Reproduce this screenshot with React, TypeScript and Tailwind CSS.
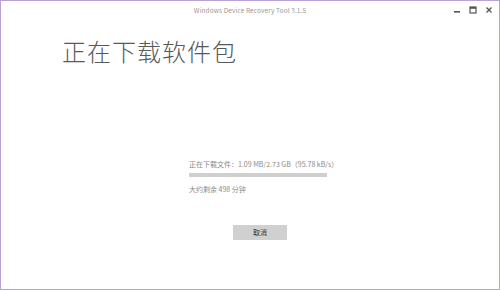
const App = () => {
    return (
        <div
            className="w-[500px] h-[290px] bg-white border border-[#b7a3d9] flex flex-col overflow-hidden"
            style={{ fontFamily: '"Noto Sans CJK SC", "Noto Sans", sans-serif' }}
        >
            {/* Title bar */}
            <div className="relative h-[20px] flex items-center justify-center shrink-0">
                <span className="text-[6.5px] text-[#9a9a9a] tracking-[0.1px]">Windows Device Recovery Tool 3.1.5</span>
                <div className="absolute right-[6px] top-[5px] flex items-center gap-[8px]">
                    <svg width="8" height="8" viewBox="0 0 8 8"><rect x="1" y="5" width="6" height="1.6" fill="#555" /></svg>
                    <svg width="8" height="8" viewBox="0 0 8 8"><rect x="1" y="1" width="6" height="6" fill="none" stroke="#555" strokeWidth="1.2" /><rect x="1" y="1" width="6" height="1.8" fill="#555" /></svg>
                    <svg width="8" height="8" viewBox="0 0 8 8"><path d="M1.5 1.5 L6.5 6.5 M6.5 1.5 L1.5 6.5" stroke="#555" strokeWidth="1.3" /></svg>
                </div>
            </div>

            {/* Heading */}
            <h1 className="pl-[61px] pt-[14px] text-[24px] leading-[32px] text-[#595959] font-light tracking-[1px]">正在下载软件包</h1>

            {/* Progress block */}
            <div className="mt-[92px] pl-[188px] flex flex-col">
                <span className="text-[7px] leading-[10px] text-[#8a8a8a]">正在下载文件：1.09 MB/2.73 GB（95.78 kB/s）</span>
                <div className="mt-[4px] w-[138px] h-[4px] bg-[#cfcfcf]" />
                <span className="mt-[7px] text-[7px] leading-[10px] text-[#8a8a8a]">大约剩余 498 分钟</span>
            </div>

            <div className="mt-[31px] pl-[232px] flex">
                <button className="w-[54px] h-[15px] bg-[#d0d0d0] text-[7px] text-[#333] flex items-center justify-center">取消</button>
            </div>
        </div>
    );
};

export default App;
